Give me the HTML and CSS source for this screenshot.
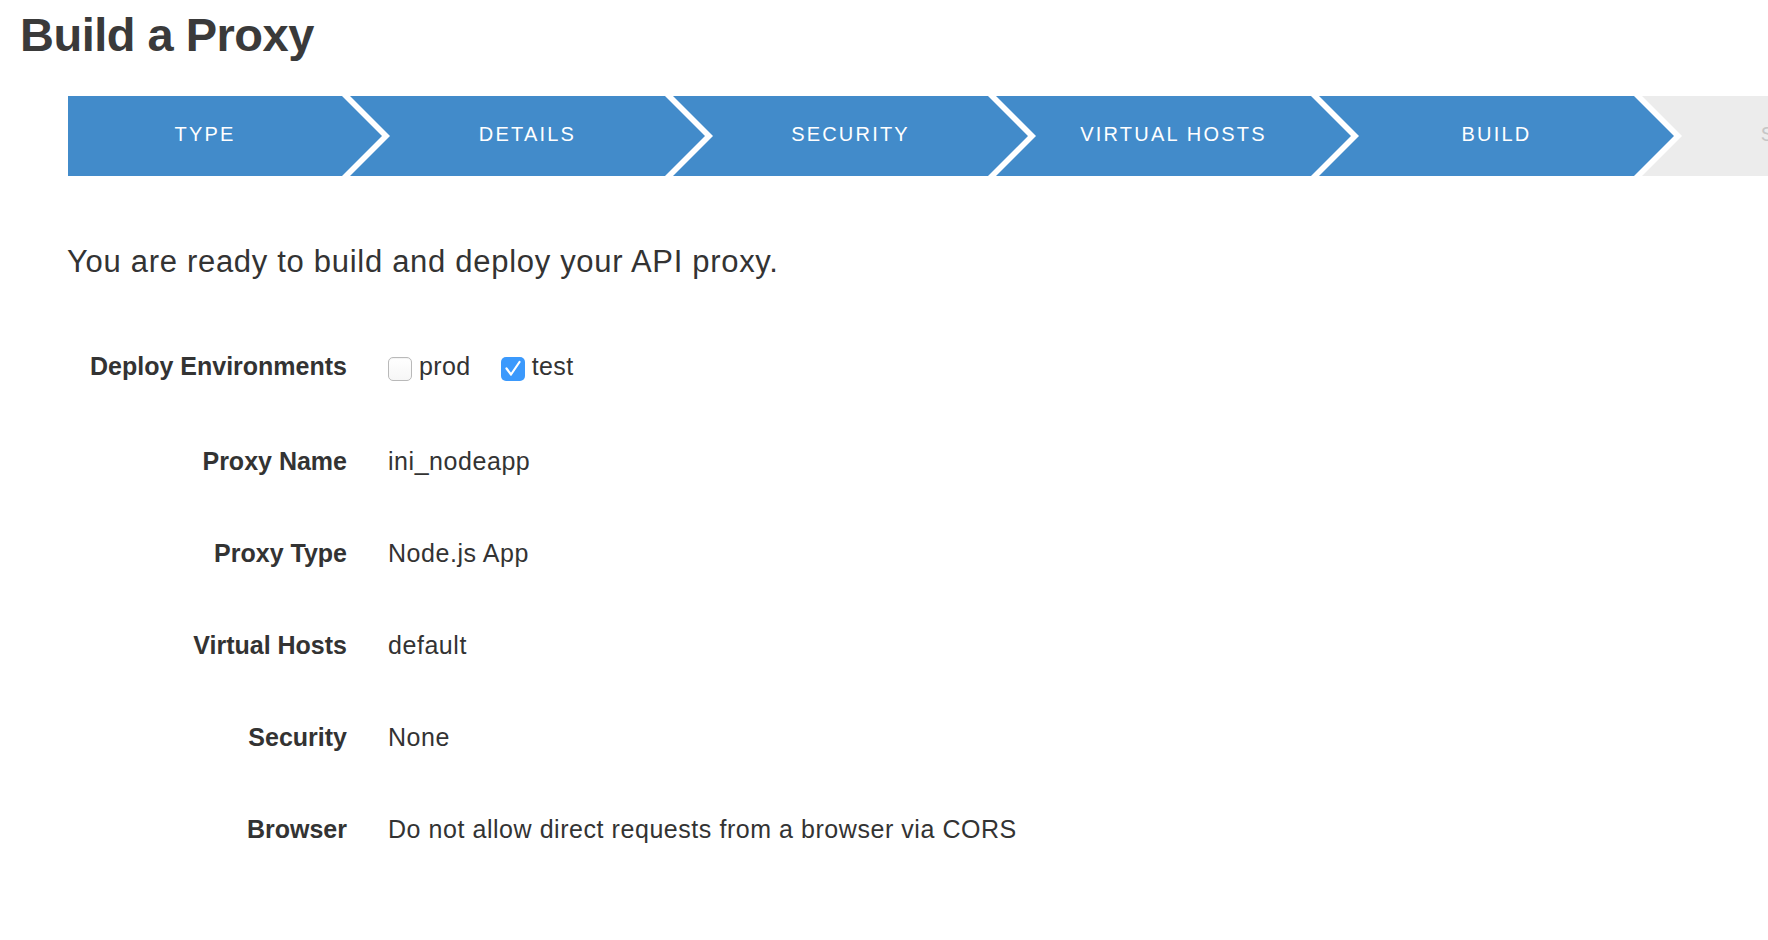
FILE: index.html
```html
<!DOCTYPE html>
<html lang="en">
<head>
<meta charset="utf-8">
<title>Build a Proxy</title>
<link rel="stylesheet" href="styles.css">
</head>
<body>
<div class="page">
  <h1 class="title">Build a Proxy</h1>

  <ol class="wizard">
    <li class="step step-first">Type</li>
    <li class="step">Details</li>
    <li class="step">Security</li>
    <li class="step">Virtual Hosts</li>
    <li class="step">Build</li>
    <li class="step step-todo">Summary</li>
  </ol>

  <p class="intro">You are ready to build and deploy your API proxy.</p>

  <div class="summary">
    <div class="row row-env">
      <div class="label">Deploy Environments</div>
      <div class="value envs">
        <label class="env">
          <span class="box"></span>
          <span class="env-name">prod</span>
        </label>
        <label class="env">
          <span class="box box-checked">
            <svg viewBox="0 0 24 24" width="24" height="24"><path d="M5.5 11.5 L10 17.5 L18.5 5" fill="none" stroke="#fff" stroke-width="2.2" stroke-linecap="round" stroke-linejoin="round"/></svg>
          </span>
          <span class="env-name">test</span>
        </label>
      </div>
    </div>
    <div class="row">
      <div class="label">Proxy Name</div>
      <div class="value">ini_nodeapp</div>
    </div>
    <div class="row">
      <div class="label">Proxy Type</div>
      <div class="value">Node.js App</div>
    </div>
    <div class="row">
      <div class="label">Virtual Hosts</div>
      <div class="value">default</div>
    </div>
    <div class="row">
      <div class="label">Security</div>
      <div class="value">None</div>
    </div>
    <div class="row">
      <div class="label">Browser</div>
      <div class="value">Do not allow direct requests from a browser via CORS</div>
    </div>
  </div>
</div>
</body>
</html>
```

FILE: styles.css
```css
html, body {
  margin: 0;
  padding: 0;
  background: #ffffff;
  overflow-x: hidden;
}

body {
  font-family: "Liberation Sans", Arial, Helvetica, sans-serif;
  color: #333333;
}

.page {
  display: flex;
  flex-direction: column;
}

.title {
  margin: 7px 0 0 20px;
  font-size: 47px;
  line-height: 56px;
  font-weight: 700;
  letter-spacing: -0.5px;
  color: #3a3a3a;
}

.wizard {
  display: flex;
  list-style: none;
  margin: 33px 0 0 68px;
  padding: 0;
  overflow: hidden;
}

.step {
  flex: none;
  box-sizing: border-box;
  width: 355px;
  height: 80px;
  margin-right: -32px;
  padding: 0 40px 4px 40px;
  line-height: 76px;
  background: #428bca;
  color: #ffffff;
  font-size: 20px;
  letter-spacing: 2.2px;
  text-transform: uppercase;
  text-align: center;
  white-space: nowrap;
  clip-path: polygon(0 0, 315px 0, 355px 50%, 315px 100%, 0 100%, 40px 50%);
}

.step-first {
  width: 314px;
  padding: 0 40px 4px 0;
  clip-path: polygon(0 0, 274px 0, 314px 50%, 274px 100%, 0 100%);
}

.step-todo {
  background: #ececec;
  color: #c6c6c6;
}

.intro {
  margin: 66px 0 0 67px;
  font-size: 31px;
  line-height: 40px;
  letter-spacing: 0.7px;
  color: #333333;
}

.summary {
  display: flex;
  flex-direction: column;
  margin-top: 38px;
}

.row {
  display: grid;
  grid-template-columns: 347px 1fr;
  column-gap: 41px;
  height: 92px;
  line-height: 92px;
  font-size: 25px;
}

.row-env {
  height: 95px;
}

.label {
  text-align: right;
  font-weight: 700;
  white-space: nowrap;
  color: #333333;
}

.value {
  letter-spacing: 0.55px;
  color: #333333;
  white-space: nowrap;
}

.envs {
  display: flex;
  align-items: flex-start;
  gap: 30px;
  padding-top: 37px;
  line-height: 24px;
}

.env {
  display: inline-flex;
  align-items: center;
  gap: 7px;
  height: 24px;
}

.env-name {
  position: relative;
  top: -3px;
  letter-spacing: 0.4px;
}

.box {
  box-sizing: border-box;
  display: block;
  width: 24px;
  height: 24px;
  border: 1px solid #b9b9b9;
  border-radius: 5px;
  background: linear-gradient(#ffffff, #f6f6f6);
  box-shadow: inset 0 1px 1px rgba(0, 0, 0, 0.05);
}

.box-checked {
  border: none;
  background: #3b99fc;
  box-shadow: none;
}

.box-checked svg {
  display: block;
}
```
